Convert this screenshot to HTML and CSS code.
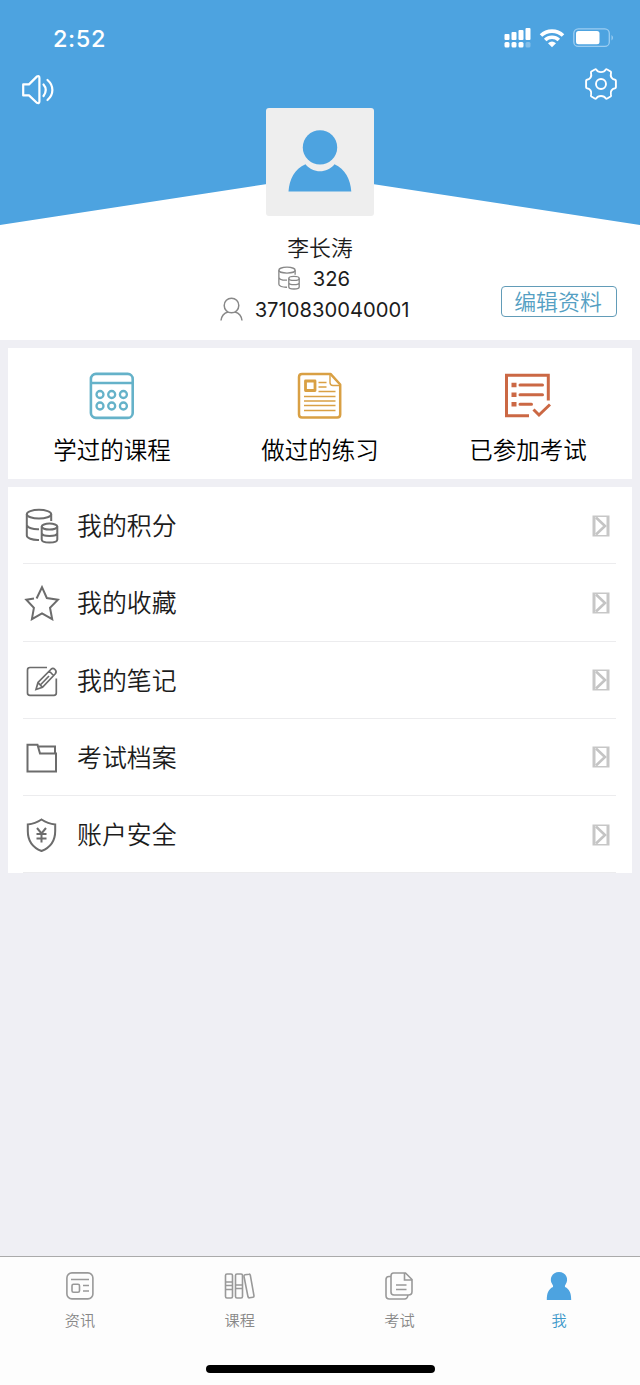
FILE: index.html
```html
<!DOCTYPE html>
<html lang="zh-CN">
<head>
<meta charset="utf-8">
<meta name="viewport" content="width=device-width, initial-scale=1">
<title>我</title>
<link rel="stylesheet" href="styles.css">
</head>
<body>
<svg class="defs" width="0" height="0" aria-hidden="true">
  <symbol id="coins" viewBox="0 0 36 36">
    <ellipse cx="15" cy="6.200" rx="12.200" ry="4.400"/>
    <path d="M2.800 6.200V27.500C2.800 30 8 32.200 15 31.900M27.200 6.200V13M2.800 17C3.500 19.800 9 21.500 15 21.200"/>
    <ellipse cx="25.500" cy="18.600" rx="7.800" ry="3"/>
    <path d="M17.700 18.600V31.500C17.700 35.500 33.300 35.500 33.300 31.500V18.600M17.700 25.200C18.500 28.900 32.500 28.900 33.300 25.200"/>
  </symbol>
  <symbol id="arrow" viewBox="0 0 18 22">
    <rect x=".5" y=".5" width="17" height="21" fill="#c7c7c7"/>
    <path d="M3.500 2H14.500V20H3.500Z" fill="#fff"/>
    <path d="M4 2.500L13 11L4 19.500" fill="none" stroke="#c4c4c4" stroke-width="2.600"/>
  </symbol>
</svg>
<div class="app">
  <header class="header">
    <div class="status">
      <span class="time">2:52</span>
      <svg class="signal" width="27" height="21" viewBox="0 0 27 21" fill="#fff">
        <rect x=".5" y="7" width="5" height="6" rx="1"/><rect x="7.500" y="5" width="5" height="8" rx="1"/><rect x="14.500" y="3" width="5" height="10" rx="1"/><rect x="21.500" y="1" width="5" height="12" rx="1"/>
        <rect x=".5" y="15" width="5" height="5.500" rx="1.500"/><rect x="7.500" y="15" width="5" height="5.500" rx="1.500"/><rect x="14.500" y="15" width="5" height="5.500" rx="1.500"/><rect x="21.500" y="15" width="5" height="5.500" rx="1.500" opacity=".3"/>
      </svg>
      <svg class="wifi" width="26" height="20" viewBox="0 0 26 20">
        <path d="M2 7.500C8 1.600 18 1.600 24 7.500M6.200 12C10 8.400 16 8.400 19.800 12" fill="none" stroke="#fff" stroke-width="3.600"/>
        <path d="M9 15.200Q13 12 17 15.200L13 19.200Z" fill="#fff"/>
      </svg>
      <svg class="battery" width="41" height="20" viewBox="0 0 41 20">
        <rect x=".8" y=".8" width="35.500" height="17.600" rx="4.500" fill="none" stroke="#9ccdf1" stroke-width="1.300"/>
        <rect x="3" y="3" width="23.500" height="13.200" rx="2.500" fill="#fff"/>
        <path d="M38.500 7V12.500Q40 11.500 40 9.800T38.500 7Z" fill="#9ccdf1"/>
      </svg>
    </div>
    <div class="toolbar">
      <svg class="speaker" width="34" height="32" viewBox="0 0 34 32" fill="none" stroke="#fff" stroke-width="2.200" stroke-linejoin="round" stroke-linecap="round">
        <path d="M2.200 10.400H8L15.800 2.600Q18.400 1.300 18.400 4V27.500Q18.400 30 15.800 28.800L8 21.400H2.200Z"/>
        <path d="M22.500 10.500Q27 15.700 22.500 22M26.500 6C33 11.600 33 20.300 26.500 26"/>
      </svg>
      <svg class="gear" width="34" height="34" viewBox="0 0 34 34" fill="none" stroke="#fff" stroke-width="1.900" stroke-linejoin="round">
        <path d="M12.300 2.600C14 5.900 20 5.900 21.700 2.600Q22.300 1.900 23.200 2.500L26.600 4.500Q27.300 5 27 5.900C26 9.500 27.800 12.200 31 12.700Q31.900 12.900 31.900 13.800V20.200Q31.900 21.100 31 21.300C27.800 21.800 26 24.500 27 28.100Q27.300 29 26.600 29.500L23.200 31.500Q22.300 32.100 21.700 31.400C20 28.100 14 28.100 12.300 31.400Q11.700 32.100 10.800 31.500L7.400 29.500Q6.700 29 7 28.100C8 24.500 6.200 21.800 3 21.300Q2.100 21.100 2.100 20.200V13.800Q2.100 12.900 3 12.700C6.200 12.200 8 9.500 7 5.900Q6.700 5 7.400 4.500L10.800 2.500Q11.700 1.900 12.300 2.600Z"/>
        <circle cx="17" cy="17" r="5"/>
      </svg>
    </div>
    <div class="avatar">
      <svg width="64" height="62" viewBox="0 0 64 62" fill="#4da3e0">
        <circle cx="32" cy="17.400" r="17.200"/>
        <path d="M.5 61.500C1.400 49 6.500 39 17.500 34.200C25 43.600 39 43.600 46.500 34.200C57 39 62.500 49 63.300 61.500Z"/>
      </svg>
    </div>
    <div class="profile">
      <div class="info">
        <div class="name">李长涛</div>
        <div class="line score"><svg class="coin-small" width="24" height="24"><use href="#coins"/></svg><span>326</span></div>
        <div class="line account"><svg width="23" height="24" viewBox="0 0 23 24" fill="none" stroke="#888" stroke-width="1.500"><circle cx="11.500" cy="8.500" r="7.300"/><path d="M1 23.500C1.500 19 4.500 16 8 15M15 15C18.500 16 21.500 19 22 23.500"/></svg><span>3710830040001</span></div>
      </div>
      <button class="edit">编辑资料</button>
    </div>
  </header>

  <section class="stats">
    <a class="stat">
      <svg width="46" height="48" viewBox="0 0 46 48" fill="none" stroke="#65b2c9" stroke-width="2.600">
        <rect x="1.900" y="1.900" width="41.800" height="44" rx="5"/><path d="M2 11H44"/>
        <g stroke-width="2.300"><circle cx="11" cy="22.500" r="3.500"/><circle cx="22.700" cy="22.500" r="3.500"/><circle cx="34.400" cy="22.500" r="3.500"/><circle cx="11" cy="34" r="3.500"/><circle cx="22.700" cy="34" r="3.500"/><circle cx="34.400" cy="34" r="3.500"/></g>
      </svg>
      <span>学过的课程</span>
    </a>
    <a class="stat">
      <svg width="46" height="48" viewBox="0 0 46 48" fill="none" stroke="#d9a044" stroke-width="2.500" stroke-linejoin="round">
        <path d="M5 1.900H33.500L43.200 12.500V42.500Q43.200 45.500 40.200 45.500H5Q2 45.500 2 42.500V4.900Q2 1.900 5 1.900Z"/>
        <path d="M33 2.500V10.500Q33 13.500 36 13.500H43" stroke-width="1.400"/>
        <rect x="8.500" y="9" width="9.500" height="9.500" stroke-width="2.800"/>
        <path d="M21.500 10.500H29.500M21.500 15H29.500M21.500 19.500H38.500M7 24.500H38.500M7 29H38.500M7 33.500H38.500M7 38.500H38.500" stroke-width="1.500"/>
      </svg>
      <span>做过的练习</span>
    </a>
    <a class="stat">
      <svg class="exam" width="48" height="48" viewBox="0 0 48 48" fill="none" stroke="#cb6844" stroke-width="3">
        <path d="M45.300 28.500V3.200H3.500V43.800H26"/>
        <path d="M17 13H39.500M17 22.800H39.500M17 32.200H28.500" stroke-linecap="round"/>
        <path d="M8.500 13H13.500M8.500 22.800H13.500M8.500 32.200H13.500" stroke-width="4.500"/>
        <path d="M30.500 37.500L36 43L47 32.500"/>
      </svg>
      <span>已参加考试</span>
    </a>
  </section>

  <nav class="menu">
    <a class="item"><svg class="icon" width="36" height="36"><use href="#coins"/></svg><span class="label">我的积分</span><svg class="arrow" width="18" height="22"><use href="#arrow"/></svg></a>
    <a class="item"><svg class="icon" width="36" height="36" viewBox="0 0 36 36"><path d="M12.600 13.500L18 2.200L22.800 13L34 14.700L26 22.800L28.200 34.200L18 28.500L7.900 34.200L9.900 22.800L2.300 14.700L10 13.500"/></svg><span class="label">我的收藏</span><svg class="arrow" width="18" height="22"><use href="#arrow"/></svg></a>
    <a class="item"><svg class="icon thin" width="36" height="36" viewBox="0 0 36 36"><path d="M23 4.500H6Q3.500 4.500 3.500 7V30Q3.500 32.300 6 32.300H30Q32.300 32.300 32.300 30V15.500M12 26.500L14 19.500L27.300 6Q29 4.500 31 6.500T31.300 10.800L18.500 24.300ZM14 19.500L18.500 24.300M25.200 8L29.500 12.500M16.300 22L25 13"/></svg><span class="label">我的笔记</span><svg class="arrow" width="18" height="22"><use href="#arrow"/></svg></a>
    <a class="item"><svg class="icon" width="36" height="36" viewBox="0 0 36 36"><path d="M3.500 31.500V4.800H13.500L16 13.500H32V31.500ZM14 6.500H31V13.500"/></svg><span class="label">考试档案</span><svg class="arrow" width="18" height="22"><use href="#arrow"/></svg></a>
    <a class="item"><svg class="icon" width="36" height="36" viewBox="0 0 36 36"><path d="M17.500 2.500C13 5.500 8.500 7 3.800 7.500V14C3.800 24 8.500 30.500 17.500 34C26.500 30.500 31.200 24 31.200 14V7.500C26.500 7 22 5.500 17.500 2.500Z"/><path d="M13 11L17.500 16.500L22 11M17.500 16.500V25.500M12.500 17H22.500M12.500 21.500H22.500"/></svg><span class="label">账户安全</span><svg class="arrow" width="18" height="22"><use href="#arrow"/></svg></a>
  </nav>

  <footer class="tabbar">
    <div class="tabs">
      <a class="tab"><svg width="30" height="30" viewBox="0 0 30 30"><rect x="1.900" y="1.900" width="26" height="26" rx="5"/><path d="M6 8.500H24M18 14.500H24M18 20H24"/><rect x="7" y="13.300" width="7.500" height="8" rx="1.500"/></svg><span>资讯</span></a>
      <a class="tab"><svg width="32" height="30" viewBox="0 0 32 30"><rect x="1.500" y="3" width="7" height="24" rx="1.500"/><rect x="11.500" y="3" width="7" height="24" rx="1.500"/><path d="M2 11H8.500M2 14.500H8.500M2 18.500H8.500M12 14H18.500M12 17.500H18.500M21 3.800L25 3.200Q26 3 26.300 4.200L30 24.800Q30.200 26 29 26.200L25.500 26.800Q24.300 27 24 25.800L20 5.500Q19.800 4 21 3.800Z"/></svg><span>课程</span></a>
      <a class="tab"><svg width="30" height="30" viewBox="0 0 30 30"><path d="M9.500 2H21.500L28 8.500V20.500Q28 24 24.500 24H10Q7 24 7 21V5Q7 2 9.500 2ZM20.500 2.500V9H27.500M7 5.500H5Q2 5.500 2 8.500V24.500Q2 28 5.500 28H20.500Q23.500 28 24 24M12 14H22.500M12 18.500H22.500"/></svg><span>考试</span></a>
      <a class="tab active"><svg width="30" height="30" viewBox="0 0 30 30"><path d="M15 1C8 1 4.800 8 8.300 13.300Q9.500 15 9 16C4.500 18 2.800 22 2.800 29H27.200C27.200 22 25.500 18 21 16Q20.500 15 21.700 13.300C25.200 8 22 1 15 1Z"/></svg><span>我</span></a>
    </div>
    <div class="home-bar"></div>
  </footer>
</div>
</body>
</html>
```
FILE: styles.css
```css
* { box-sizing: border-box; }
body {
  margin: 0;
  background: #efeff4;
  color: #1c1c1c;
  font-family: "Noto Sans CJK SC", sans-serif;
  font-weight: 350;
}
svg { display: block; flex: none; }
.defs { position: absolute; }
.app { width: 640px; height: 1385px; display: flex; flex-direction: column; }

.header {
  height: 340px;
  display: flex;
  flex-direction: column;
  align-items: center;
  background: #fff;
  position: relative;
  z-index: 0;
}
.header::before {
  content: "";
  position: absolute;
  inset: 0 0 115px;
  z-index: -1;
  background: #4da3e0;
  clip-path: polygon(0 0, 100% 0, 100% 100%, 50% 176px, 0 100%);
}
.status { width: 100%; height: 68px; padding: 8px 26px 0 53px; display: flex; align-items: center; }
.time { color: #fff; font: 500 23.500px/28px Inter, sans-serif; letter-spacing: .6px; margin: 2px auto 0 0; }
.signal { margin-right: 8px; margin-top: -2px; }
.wifi { margin-right: 8px; }
.toolbar { width: 100%; height: 40px; padding: 0 22px; display: flex; justify-content: space-between; align-items: flex-start; }
.speaker { margin: 6px 0 0 -1px; }
.gear { margin-top: -1px; }
.avatar {
  width: 108px;
  height: 108px;
  background: #eee;
  border-radius: 3px;
  display: flex;
  justify-content: center;
  padding-top: 22px;
}
.profile { width: 100%; display: grid; grid-template-columns: 1fr auto 1fr; padding-top: 15px; }
.info { grid-column: 2; display: flex; flex-direction: column; align-items: center; }
.name { font-size: 21.800px; line-height: 31px; height: 32px; }
.line { height: 31px; display: flex; align-items: center; gap: 12px; font: 400 20.200px/31px Inter, sans-serif; }
.score { padding-right: 13px; }
.account { padding-right: 11px; }
.line span { margin-top: -1px; }
.line svg { margin-top: -1px; }
.coin-small { fill: none; stroke: #888; stroke-width: 2; }
.edit {
  grid-column: 3;
  justify-self: end;
  align-self: end;
  width: 116px;
  height: 31px;
  margin: 0 23px 8px 0;
  padding: 0 2px 2px 0;
  border: 1px solid #629cb8;
  border-radius: 4px;
  background: #fff;
  color: #559fc3;
  font: 350 21.900px/27px "Noto Sans CJK SC", sans-serif;
}

.stats { margin: 8px 8px 0; height: 131px; background: #fff; display: grid; grid-template-columns: repeat(3, 1fr); }
.stat { display: flex; flex-direction: column; align-items: center; padding-top: 24px; gap: 11px; color: #000; font-size: 23.500px; line-height: 36px; }
.exam { margin-right: 2px; }

.menu { margin: 8px 8px 0; background: #fff; }
.item { height: 77.250px; margin: 0 16px 0 15px; border-bottom: 1.500px solid #ececee; display: flex; align-items: center; font-size: 24.900px; line-height: 36px; }
.icon { margin: 2px 17px 0 1px; fill: none; stroke: #6c6c6c; stroke-width: 2; }
.thin { stroke-width: 1.700; }
.label { margin-top: -2px; }
.arrow { margin: 1px 6px 0 auto; }

.tabbar { margin-top: auto; height: 129px; background: #fdfdfd; border-top: 1px solid #aaa; display: flex; flex-direction: column; align-items: center; }
.tabs { width: 100%; height: 108px; padding-right: 1px; display: grid; grid-template-columns: repeat(4, 1fr); }
.tab { display: flex; flex-direction: column; align-items: center; padding-top: 14px; gap: 7px; color: #888; font-size: 15.200px; line-height: 23px; }
.tab svg { fill: none; stroke: #999; stroke-width: 1.600; }
.tab.active { color: #3e99ca; }
.tab.active svg { fill: #4da3e0; stroke: none; }
.home-bar { width: 229px; height: 8px; border-radius: 4px; background: #000; }
```
